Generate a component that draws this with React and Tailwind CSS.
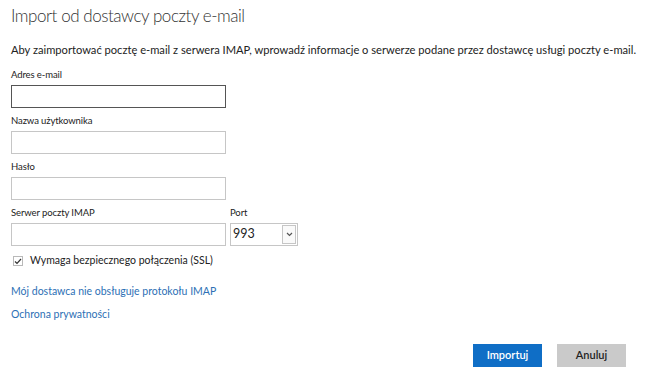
export default function App() {
  const font = { fontFamily: 'Lato, "Open Sans", sans-serif' };
  return (
    <div className="h-[379px] w-[646px] bg-white px-[11px] text-[#333]" style={font}>
      <h1 className="pt-[2px] text-[17px] font-light leading-[28px] tracking-[-0.45px] text-[#333]">Import od dostawcy poczty e-mail</h1>
      <p className="mt-[12px] whitespace-nowrap text-[11.15px] leading-[16px] text-[#222]">
        Aby zaimportować pocztę e-mail z serwera IMAP, wprowadź informacje o serwerze podane przez dostawcę usługi poczty e-mail.
      </p>
      <Field label="Adres e-mail" first className="mt-[10px]" />
      <Field label="Nazwa użytkownika" className="mt-[6px]" />
      <Field label="Hasło" className="mt-[6px]" />
      <div className="mt-[6px] flex gap-[4px]">
        <Field label="Serwer poczty IMAP" />
        <div>
          <div className="text-[9.5px] leading-[14px] tracking-[-0.1px] text-[#222]">Port</div>
          <div className="mt-[3px] flex h-[23px] w-[68px] items-center border border-[#c6c6c6] bg-white pl-[2px]">
            <span className="flex-1 text-[12.5px] text-[#222]">993</span>
            <span className="mr-[1px] flex h-[19px] w-[14px] items-center justify-center border border-[#c6c6c6] bg-[#fafafa]">
              <svg width="7" height="5" viewBox="0 0 7 5"><path d="M1 1l2.5 2.5L6 1" fill="none" stroke="#555" strokeWidth="1.2" /></svg>
            </span>
          </div>
        </div>
      </div>
      <label className="mt-[7px] flex h-[16px] items-center gap-[7px] pl-[2px] text-[10.5px] text-[#222]">
        <span className="flex h-[10px] w-[10px] items-center justify-center border border-[#b9b9b9] bg-white">
          <svg width="8" height="7" viewBox="0 0 8 7"><path d="M1 3.5l2 2L7 1" fill="none" stroke="#333" strokeWidth="1.2" /></svg>
        </span>
        Wymaga bezpiecznego połączenia (SSL)
      </label>
      <div className="mt-[14px] text-[10.5px] leading-[16px] text-[#2d70b5]">Mój dostawca nie obsługuje protokołu IMAP</div>
      <div className="mt-[7px] text-[10.5px] leading-[16px] text-[#2d70b5]">Ochrona prywatności</div>
      <div className="mt-[22px] flex justify-end gap-[15px] pr-[9px]">
        <button type="button" className="h-[23px] w-[69px] bg-[#0f6ec6] text-[11px] font-semibold text-white">Importuj</button>
        <button type="button" className="h-[23px] w-[69px] bg-[#cacaca] text-[11px] font-semibold text-[#222]">Anuluj</button>
      </div>
    </div>
  );
}

function Field({ label, first, className = "" }) {
  return (
    <div className={className}>
      <div className="text-[9.5px] leading-[14px] tracking-[-0.1px] text-[#222]">{label}</div>
      <div className={`mt-[3px] h-[23px] w-[215px] border bg-white ${first ? "border-[#555]" : "border-[#c6c6c6]"}`} />
    </div>
  );
}
